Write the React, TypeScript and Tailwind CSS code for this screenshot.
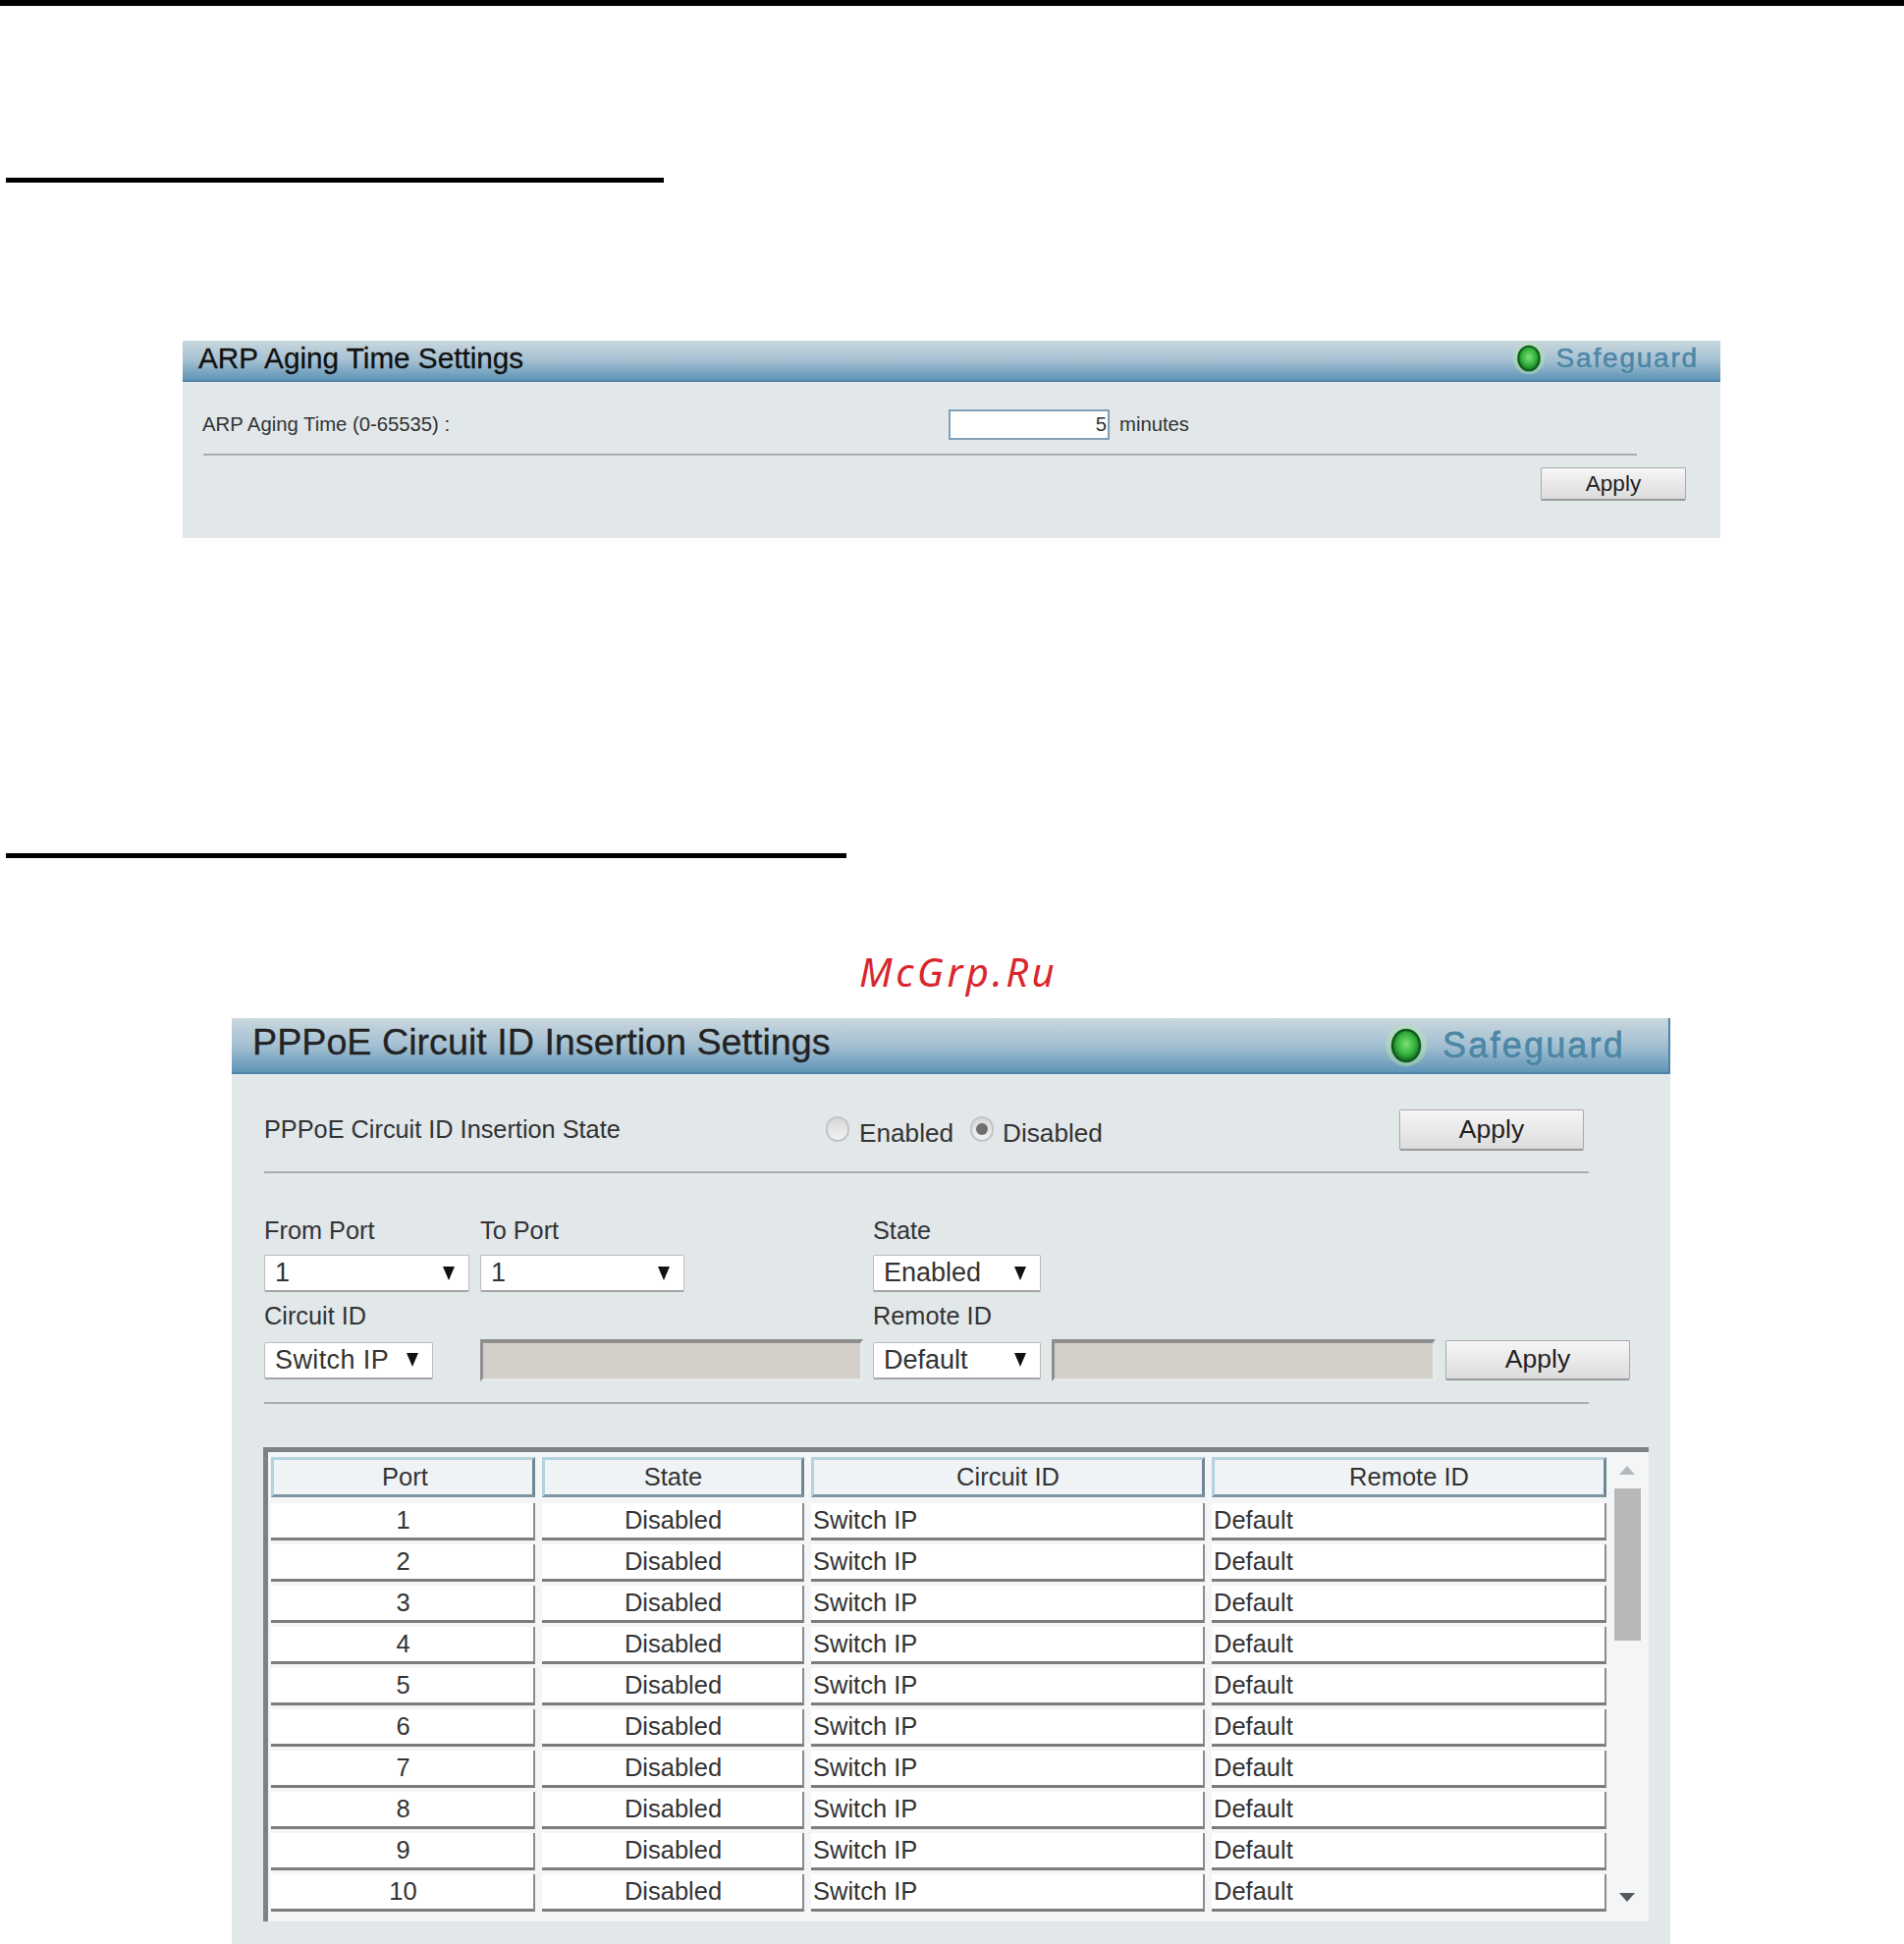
import React from 'react';

const ports = [1, 2, 3, 4, 5, 6, 7, 8, 9, 10];

// green status led plus the Safeguard word, shared by both panel headers
const Safeguard = ({ large }: { large?: boolean }) => (
  <div className={large ? 'flex items-center gap-[15px] mr-[44px]' : 'flex shrink-0 items-center gap-[11px] mr-[22px] -mt-[4px]'}>
    <svg width={large ? 44 : 34} height={large ? 44 : 34} viewBox="0 0 44 44">
      <defs>
        <radialGradient id={large ? 'ledB' : 'ledA'} cx="50%" cy="45%" r="55%">
          <stop offset="0%" stopColor="#7ee07a" />
          <stop offset="60%" stopColor="#35b23c" />
          <stop offset="100%" stopColor="#0d6b1c" />
        </radialGradient>
      </defs>
      <circle cx="22" cy="22" r="21" fill="#b6e8a8" opacity="0.45" />
      <ellipse cx="22" cy="22" rx="14" ry="16" fill={`url(#${large ? 'ledB' : 'ledA'})`} stroke="#0f5c1e" strokeWidth="2.5" />
    </svg>
    <span
      className={
        large
          ? 'text-[36px] tracking-[2.2px] text-[#4d87a6] [-webkit-text-stroke:0.8px_#4d87a6] [text-shadow:0_0_2px_#c5dbe5]'
          : 'text-[28px] tracking-[1.8px] text-[#4d87a6] [-webkit-text-stroke:0.7px_#4d87a6] [text-shadow:0_0_2px_#c5dbe5]'
      }
    >
      Safeguard
    </span>
  </div>
);

const ApplyButton = ({ className }: { className: string }) => (
  <button className={`flex items-center justify-center rounded-[2px] border border-[#a9a9a9] border-b-[2px] border-b-[#999] bg-gradient-to-b from-[#f6f6f6] to-[#dcdcdc] text-[#222] ${className}`}>
    Apply
  </button>
);

const Divider = ({ className }: { className: string }) => (
  <div className={`h-[2px] bg-[#a9adaf] border-l-[2px] border-[#a9adaf] ${className}`} />
);

const Dropdown = ({ value, className, textClass = '' }: { value: string; className: string; textClass?: string }) => (
  <div className={`flex h-[38px] shrink-0 items-center justify-between rounded-[2px] border border-[#bcbcbc] border-b-[2px] border-b-[#a5a5a5] bg-white pl-[10px] pr-[13px] text-[27px] text-[#333] ${className}`}>
    <span className={`whitespace-nowrap ${textClass}`}>{value}</span>
    <svg width="14" height="16" viewBox="0 0 14 16" className="shrink-0">
      <path d="M1 1 H13 L7 15 Z" fill="#111" />
    </svg>
  </div>
);

const DisabledBox = ({ className }: { className: string }) => (
  <div className={`h-[43px] shrink-0 border-t-[4px] border-l-[3px] border-t-[#8f8f8f] border-l-[#8f8f8f] border-r-[3px] border-b-[3px] border-r-[#e6eaec] border-b-[#e6eaec] bg-[#d3cfc9] ${className}`} />
);

const Radio = ({ checked }: { checked?: boolean }) => (
  <span className="-mt-[3px] flex h-[26px] w-[24px] shrink-0 items-center justify-center rounded-full border-2 border-[#c3c6c8] bg-gradient-to-b from-[#d8d8d8] to-[#f2f2f2]">
    {checked && <span className="h-[12px] w-[12px] rounded-full bg-[#6e6e6e]" />}
  </span>
);

const headCell = 'flex h-[41px] items-center justify-center border-[3px] border-t-[#b4d3df] border-l-[#b4d3df] border-r-[#6f8894] border-b-[#7d98a5] bg-[#eff3f5] text-[25.5px]';
const bodyCell = 'flex h-[38px] items-center border-r-[2px] border-b-[3px] border-r-[#8c8c8c] border-b-[#7c7c7c] bg-white text-[25.5px]';

const App = () => {
  return (
    <div className="h-[1980px] overflow-hidden bg-white font-['Liberation_Sans',Arial,sans-serif]">
      <div className="h-[6px] bg-black" />

      <div className="ml-[6px] mt-[175px] h-[5px] w-[670px] bg-black" />

      {/* ARP panel */}
      <section className="ml-[186px] mt-[161px] h-[201px] w-[1566px] bg-[#e2e7ea] text-[20.3px] text-[#333]">
        <header className="flex h-[42px] items-center justify-between border-b-[2px] border-[#4d84a8] bg-gradient-to-b from-[#c9d7dd] via-[#a4c0d2] to-[#5f95b7] pl-[16px]">
          <h2 className="-mt-[4px] text-[29.7px] font-normal text-[#111] [-webkit-text-stroke:0.3px_#111]">ARP Aging Time Settings</h2>
          <Safeguard />
        </header>
        <div className="ml-[20px] mt-[28px] flex h-[31px] items-center">
          <span className="w-[760px]">ARP Aging Time (0-65535) :</span>
          <input
            readOnly
            value="5"
            className="h-[31px] w-[164px] border-2 border-[#7f9fb8] bg-white pr-[1px] text-right text-[20.3px] text-[#333]"
          />
          <span className="ml-[10px]">minutes</span>
        </div>
        <Divider className="ml-[21px] mt-[14px] w-[1460px]" />
        <div className="mt-[12px] flex justify-end pr-[35px]">
          <ApplyButton className="h-[34px] w-[148px] text-[22.5px]" />
        </div>
      </section>

      <div className="ml-[6px] mt-[321px] h-[5px] w-[856px] bg-black" />

      <div className="ml-[875px] mt-[92px] h-[48px] text-[40px] italic leading-[48px] tracking-[3.5px] text-[#d9272e] font-['Noto_Sans',sans-serif]">
        McGrp.Ru
      </div>

      {/* PPPoE panel */}
      <section className="ml-[236px] mt-[23px] h-[943px] w-[1465px] bg-[#e2e7ea] text-[25.3px] text-[#333]">
        <header className="flex h-[57px] items-center justify-between border-b-[2px] border-r-[2px] border-[#4d84a8] bg-gradient-to-b from-[#c9d7dd] via-[#a4c0d2] to-[#5f95b7] pl-[21px]">
          <h2 className="-mt-[6px] text-[37.7px] font-normal text-[#222] [-webkit-text-stroke:0.3px_#222]">PPPoE Circuit ID Insertion Settings</h2>
          <Safeguard large />
        </header>

        <div className="ml-[33px] w-[1349px]">
          <div className="mt-[36px] flex h-[42px] items-center">
            <span className="w-[572px]">PPPoE Circuit ID Insertion State</span>
            <Radio />
            <span className="ml-[10px] mt-[7px] w-[113px] text-[26.2px]">Enabled</span>
            <Radio checked />
            <span className="ml-[9px] mt-[7px] text-[26.2px]">Disabled</span>
            <ApplyButton className="ml-auto mr-[5px] h-[42px] w-[188px] text-[26.5px]" />
          </div>
          <Divider className="mt-[21px]" />

          <div className="mt-[43px] flex leading-[30px]">
            <span className="w-[220px]">From Port</span>
            <span className="w-[400px]">To Port</span>
            <span>State</span>
          </div>
          <div className="mt-[10px] flex">
            <Dropdown value="1" className="w-[209px]" />
            <Dropdown value="1" className="ml-[11px] w-[208px]" />
            <Dropdown value="Enabled" className="ml-[192px] w-[171px]" />
          </div>
          <div className="mt-[9px] flex leading-[30px]">
            <span className="w-[620px]">Circuit ID</span>
            <span>Remote ID</span>
          </div>
          <div className="mt-[9px] flex items-center">
            <Dropdown value="Switch IP" className="w-[172px] pr-[9px]" textClass="tracking-[0.4px]" />
            <DisabledBox className="ml-[48px] w-[390px]" />
            <Dropdown value="Default" className="ml-[10px] w-[171px]" />
            <DisabledBox className="ml-[11px] w-[391px]" />
            <ApplyButton className="ml-[10px] h-[41px] w-[188px] shrink-0 text-[26.5px]" />
          </div>
          <Divider className="mt-[21px]" />
        </div>

        {/* port table with its scroll bar */}
        <div className="ml-[32px] mt-[44px] flex h-[483px] w-[1411px] border-l-[5px] border-t-[5px] border-[#7f8284] bg-[#f3f5f6] pl-[3px] pt-[5px]">
          <div className="grid grid-cols-[269px_267px_401px_402px] content-start gap-x-[7px]">
            <div className={`${headCell} pl-[4px]`}>Port</div>
            <div className={headCell}>State</div>
            <div className={headCell}>Circuit ID</div>
            <div className={headCell}>Remote ID</div>
            <div className="col-span-4 grid grid-cols-subgrid gap-y-[4px] pt-[6px]">
              {ports.map((p) => (
                <React.Fragment key={p}>
                  <div className={`${bodyCell} justify-center pl-[2px]`}>{p}</div>
                  <div className={`${bodyCell} justify-center pl-[2px]`}>Disabled</div>
                  <div className={`${bodyCell} pl-[2px]`}>Switch IP</div>
                  <div className={`${bodyCell} pl-[2px]`}>Default</div>
                </React.Fragment>
              ))}
            </div>
          </div>
          <div className="ml-[7px] flex w-[28px] flex-col items-center pt-[8px]">
            <svg width="18" height="11" viewBox="0 0 18 11">
              <path d="M9 1 L17 10 H1 Z" fill="#b4b8ba" />
            </svg>
            <div className="mt-[13px] h-[155px] w-[27px] bg-[#b8b8b8]" />
            <svg width="18" height="11" viewBox="0 0 18 11" className="mt-[256px]">
              <path d="M1 1 H17 L9 10 Z" fill="#55595b" />
            </svg>
          </div>
        </div>
      </section>
    </div>
  );
};

export default App;
